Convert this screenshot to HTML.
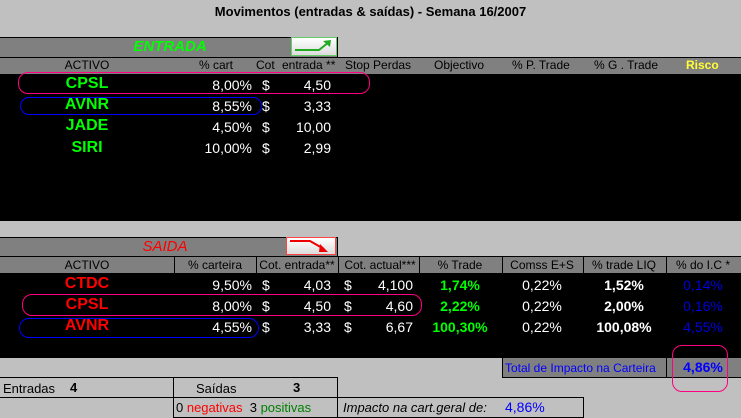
<!DOCTYPE html><html><head><style>
body{margin:0;width:741px;height:418px;background:#c0c0c0;font-family:"Liberation Sans",Arial,sans-serif;font-size:12px;position:relative;overflow:hidden}
div,span{position:absolute;white-space:nowrap}
.c{transform:translateX(-50%)}
.r{transform:translateX(-100%)}
.g{background:#808080}
.k{background:#000}
.tk{font-weight:bold;font-size:16px}
.w{color:#fff}
.ov{border-radius:10px;box-sizing:border-box}
</style></head><body>
<div style="left:0;top:4px;width:741px;text-align:center;font-weight:bold;font-size:13px">Movimentos (entradas &amp; saídas) - Semana 16/2007</div>

<!-- ENTRADA -->
<div class="g" style="left:0;top:37px;width:337px;height:20px;border-top:1px solid #000;border-right:1px solid #000"></div>
<div class="c" style="left:170px;top:38px;color:#00ff00;font-style:italic;font-weight:bold;font-size:15px">ENTRADA</div>
<div style="left:291px;top:37px;width:44px;height:17px;background:linear-gradient(#fff,#ddd);border:1px solid #6c6"></div>
<svg style="position:absolute;left:291px;top:37px" width="46" height="19"><path d="M4 13 H28 L38 5" stroke="#2a2" stroke-width="2" fill="none"/><path d="M32 4 L40 3 L39 10 Z" fill="#2a2"/></svg>
<div class="g" style="left:0;top:57px;width:741px;height:16px;border-top:1px solid #000"></div>
<div class="c" style="left:87px;top:58px">ACTIVO</div>
<div class="r" style="left:233px;top:58px">% cart</div>
<div style="left:256px;top:58px">Cot</div>
<div style="left:282px;top:58px">entrada **</div>
<div style="left:345px;top:58px">Stop Perdas</div>
<div style="left:434px;top:58px">Objectivo</div>
<div style="left:512px;top:58px">% P. Trade</div>
<div style="left:594px;top:58px">% G . Trade</div>
<div style="left:686px;top:58px;color:#ffff33;font-weight:bold">Risco</div>
<div class="k" style="left:0;top:74px;width:741px;height:147px"></div>

<div class="tk c" style="left:87px;top:75px;color:#00ff00">CPSL</div>
<div class="tk c" style="left:87px;top:96px;color:#00ff00">AVNR</div>
<div class="tk c" style="left:87px;top:117px;color:#00ff00">JADE</div>
<div class="tk c" style="left:87px;top:139px;color:#00ff00">SIRI</div>
<div class="w r" style="left:252px;top:77px;font-size:14px">8,00%</div>
<div class="w r" style="left:252px;top:98px;font-size:14px">8,55%</div>
<div class="w r" style="left:252px;top:119px;font-size:14px">4,50%</div>
<div class="w r" style="left:252px;top:140px;font-size:14px">10,00%</div>
<div class="w" style="left:262px;top:77px;font-size:14px">$</div>
<div class="w" style="left:262px;top:98px;font-size:14px">$</div>
<div class="w" style="left:262px;top:119px;font-size:14px">$</div>
<div class="w" style="left:262px;top:140px;font-size:14px">$</div>
<div class="w r" style="left:331px;top:77px;font-size:14px">4,50</div>
<div class="w r" style="left:331px;top:98px;font-size:14px">3,33</div>
<div class="w r" style="left:331px;top:119px;font-size:14px">10,00</div>
<div class="w r" style="left:331px;top:140px;font-size:14px">2,99</div>
<div class="ov" style="left:18px;top:72px;width:352px;height:22px;border:1px solid #ff0080"></div>
<div class="ov" style="left:20px;top:97px;width:242px;height:18px;border:1px solid #00f"></div>

<!-- SAIDA -->
<div class="g" style="left:0;top:237px;width:337px;height:19px;border-top:1px solid #000;border-right:1px solid #000"></div>
<div class="c" style="left:165px;top:238px;color:#ff0000;font-style:italic;font-size:15px">SAIDA</div>
<div style="left:286px;top:237px;width:48px;height:16px;background:linear-gradient(#fff,#ddd);border:1px solid #f44"></div>
<svg style="position:absolute;left:286px;top:237px" width="50" height="19"><path d="M4 4 H24 L38 12" stroke="#e00" stroke-width="2" fill="none"/><path d="M34 7 L42 15 L33 15 Z" fill="#e00"/></svg>
<div class="g" style="left:0;top:256px;width:741px;height:17px;border-top:1px solid #000"></div>
<div style="left:174px;top:256px;width:1px;height:17px;background:#000"></div>
<div style="left:256px;top:256px;width:1px;height:17px;background:#000"></div>
<div style="left:338px;top:256px;width:1px;height:17px;background:#000"></div>
<div style="left:419px;top:256px;width:1px;height:17px;background:#000"></div>
<div style="left:502px;top:256px;width:1px;height:17px;background:#000"></div>
<div style="left:583px;top:256px;width:1px;height:17px;background:#000"></div>
<div style="left:666px;top:256px;width:1px;height:17px;background:#000"></div>
<div class="c" style="left:87px;top:258px">ACTIVO</div>
<div class="c" style="left:215px;top:258px">% carteira</div>
<div class="c" style="left:297px;top:258px">Cot. entrada**</div>
<div class="c" style="left:380px;top:258px">Cot. actual***</div>
<div class="c" style="left:460px;top:258px">% Trade</div>
<div class="c" style="left:542px;top:258px">Comss E+S</div>
<div class="c" style="left:624px;top:258px">% trade LIQ</div>
<div class="c" style="left:703px;top:258px">% do I.C *</div>
<div class="k" style="left:0;top:273px;width:741px;height:85px"></div>
<div class="tk c" style="left:87px;top:275px;color:#ff0000">CTDC</div>
<div class="tk c" style="left:87px;top:296px;color:#ff0000">CPSL</div>
<div class="tk c" style="left:87px;top:317px;color:#ff0000">AVNR</div>
<div class="w r" style="left:252px;top:277px;font-size:14px">9,50%</div>
<div class="w r" style="left:252px;top:298px;font-size:14px">8,00%</div>
<div class="w r" style="left:252px;top:319px;font-size:14px">4,55%</div>
<div class="w" style="left:262px;top:277px;font-size:14px">$</div>
<div class="w" style="left:262px;top:298px;font-size:14px">$</div>
<div class="w" style="left:262px;top:319px;font-size:14px">$</div>
<div class="w r" style="left:331px;top:277px;font-size:14px">4,03</div>
<div class="w r" style="left:331px;top:298px;font-size:14px">4,50</div>
<div class="w r" style="left:331px;top:319px;font-size:14px">3,33</div>
<div class="w" style="left:344px;top:277px;font-size:14px">$</div>
<div class="w" style="left:344px;top:298px;font-size:14px">$</div>
<div class="w" style="left:344px;top:319px;font-size:14px">$</div>
<div class="w r" style="left:413px;top:277px;font-size:14px">4,100</div>
<div class="w r" style="left:413px;top:298px;font-size:14px">4,60</div>
<div class="w r" style="left:413px;top:319px;font-size:14px">6,67</div>
<div class="c" style="left:460px;top:277px;font-size:14px;font-weight:bold;color:#00ff00">1,74%</div>
<div class="c" style="left:460px;top:298px;font-size:14px;font-weight:bold;color:#00ff00">2,22%</div>
<div class="c" style="left:460px;top:319px;font-size:14px;font-weight:bold;color:#00ff00">100,30%</div>
<div class="w c" style="left:542px;top:277px;font-size:14px">0,22%</div>
<div class="w c" style="left:542px;top:298px;font-size:14px">0,22%</div>
<div class="w c" style="left:542px;top:319px;font-size:14px">0,22%</div>
<div class="w c" style="left:624px;top:277px;font-size:14px;font-weight:bold">1,52%</div>
<div class="w c" style="left:624px;top:298px;font-size:14px;font-weight:bold">2,00%</div>
<div class="w c" style="left:624px;top:319px;font-size:14px;font-weight:bold">100,08%</div>
<div class="c" style="left:703px;top:277px;font-size:14px;color:#0000dd">0,14%</div>
<div class="c" style="left:703px;top:298px;font-size:14px;color:#0000dd">0,16%</div>
<div class="c" style="left:703px;top:319px;font-size:14px;color:#0000dd">4,55%</div>
<div class="ov" style="left:22px;top:294px;width:400px;height:22px;border:1px solid #ff0080"></div>
<div class="ov" style="left:19px;top:318px;width:240px;height:20px;border:1px solid #00f"></div>

<div class="g" style="left:502px;top:358px;width:239px;height:19px;border-left:1px solid #000;border-bottom:1px solid #000"></div>
<div style="left:666px;top:358px;width:1px;height:19px;background:#000"></div>
<div style="left:505px;top:361px;color:#0000ff">Total de Impacto na Carteira</div>
<div class="c" style="left:703px;top:359px;color:#0000ff;font-size:14px;font-weight:bold">4,86%</div>
<div class="ov" style="left:672px;top:345px;width:56px;height:47px;border:1px solid #ff0080"></div>

<!-- bottom -->
<div style="left:0;top:377px;width:337px;height:40px;border-top:1px solid #000;border-right:1px solid #000"></div>
<div style="left:0;top:397px;width:337px;height:1px;background:#000"></div>
<div style="left:173px;top:377px;width:1px;height:41px;background:#000"></div>
<div style="left:173px;top:417px;width:164px;height:1px;background:#000"></div>
<div style="left:3px;top:381px;font-size:13px">Entradas</div>
<div style="left:70px;top:380px;font-size:13px;font-weight:bold">4</div>
<div style="left:196px;top:381px;font-size:13px">Saídas</div>
<div style="left:293px;top:380px;font-size:13px;font-weight:bold">3</div>
<div style="left:176px;top:400px;font-size:13px">0 <span style="position:static;color:#ff0000">negativas</span> &nbsp;3 <span style="position:static;color:#008000">positivas</span></div>
<div style="left:337px;top:397px;width:245px;height:19px;border:1px solid #000"></div>
<div style="left:343px;top:400px;font-size:13px;font-style:italic">Impacto na cart.geral de:</div>
<div style="left:505px;top:399px;font-size:14px;color:#0000ff">4,86%</div>
</body></html>
